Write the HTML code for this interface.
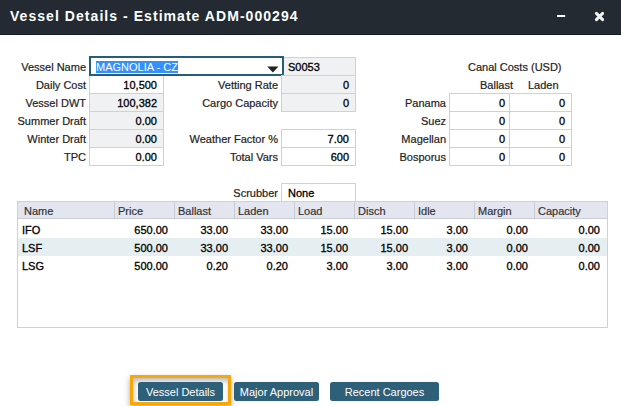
<!DOCTYPE html>
<html><head><meta charset="utf-8">
<style>
*{margin:0;padding:0;box-sizing:border-box}
html,body{width:621px;height:406px;overflow:hidden;background:#fff;font-family:"Liberation Sans",sans-serif;font-size:11px;color:#222;-webkit-text-stroke:0.2px currentColor}
.a{position:absolute;white-space:nowrap}
#tb{position:absolute;left:0;top:0;width:621px;height:35px;background:#232a31;border-bottom:1px solid #161d23}
#title{-webkit-text-stroke:0;position:absolute;left:10px;top:8px;font-size:14px;font-weight:bold;color:#fff;letter-spacing:1.05px;line-height:16px}
#min{position:absolute;left:557px;top:14px;width:9px;height:3px;background:#fff}
.lbl{position:absolute;text-align:right;line-height:18px;height:18px;color:#222;padding-top:1px}
.inp{position:absolute;border:1px solid #cbd2db;height:19px;line-height:17px;text-align:right;padding-right:6px;padding-top:1px;color:#000;background:#fff;-webkit-text-stroke:0.3px #000}
.ro{background:#eff1f3}
.grid{position:absolute;left:17px;top:201px;width:591px;height:127px;border:1px solid #cdd2da;background:#fff}
.hdr{position:absolute;left:0;top:0;width:589px;height:17px;background:#e4e6ef;border-bottom:1px solid #c8cdd7}
.hc{position:absolute;top:0;height:17px;line-height:16px;padding-top:1px;padding-left:3px;color:#333;border-left:1px solid #c8ccd6}
.row{position:absolute;left:0;width:589px;height:18px}
.c{position:absolute;line-height:18px;margin-top:1px;text-align:right;color:#000;-webkit-text-stroke:0.3px #000}
.btn{-webkit-text-stroke:0;padding-top:1px;position:absolute;top:382px;height:19px;background:#2e6079;color:#fff;border-radius:2.5px;text-align:center;line-height:19px}
</style></head><body>
<div id="tb"><div id="title">Vessel Details - Estimate ADM-000294</div>
<svg style="position:absolute;left:0;top:0" width="621" height="34"><rect x="557" y="15" width="8.2" height="2" fill="#fff"/></svg>
<svg style="position:absolute;left:594px;top:11px" width="11" height="11" viewBox="0 0 11 11"><path d="M2.4 2.4 L8.6 8.6 M8.6 2.4 L2.4 8.6" stroke="#f2f2f2" stroke-width="3" stroke-linecap="round"/></svg>
</div>

<!-- column 1 -->
<div class="lbl" style="left:0;width:86px;top:57px">Vessel Name</div>
<div class="lbl" style="left:0;width:86px;top:75px">Daily Cost</div>
<div class="lbl" style="left:0;width:86px;top:93px">Vessel DWT</div>
<div class="lbl" style="left:0;width:86px;top:111px">Summer Draft</div>
<div class="lbl" style="left:0;width:86px;top:129px">Winter Draft</div>
<div class="lbl" style="left:0;width:86px;top:147px">TPC</div>

<div class="inp ro" style="left:281px;top:57px;width:75px;text-align:left;padding-left:6px"><span>S0053</span></div>
<div class="inp" style="left:89px;top:75px;width:75px">10,500</div>
<div class="inp ro" style="left:89px;top:93px;width:75px">100,382</div>
<div class="inp ro" style="left:89px;top:111px;width:75px">0.00</div>
<div class="inp ro" style="left:89px;top:129px;width:75px">0.00</div>
<div class="inp" style="left:89px;top:147px;width:75px">0.00</div>

<div style="position:absolute;left:89px;top:56px;width:195px;height:20px;border:2px solid #275e77;background:#fff">
  <span class="a" style="left:5px;top:3px;line-height:12px;background:#3390ff;color:#fff;-webkit-text-stroke:0">MAGNOLIA - CZ</span>
  <svg style="position:absolute;left:176px;top:8px" width="12" height="7" viewBox="0 0 12 7"><path d="M0.2 0.5 L11.5 0.5 L5.85 6.6 Z" fill="#222"/></svg>
</div>

<!-- column 2 -->
<div class="lbl" style="left:180px;width:98px;top:75px">Vetting Rate</div>
<div class="lbl" style="left:180px;width:98px;top:93px">Cargo Capacity</div>
<div class="lbl" style="left:180px;width:98px;top:129px">Weather Factor %</div>
<div class="lbl" style="left:180px;width:98px;top:147px">Total Vars</div>
<div class="inp ro" style="left:281px;top:75px;width:75px">0</div>
<div class="inp ro" style="left:281px;top:93px;width:75px">0</div>
<div class="inp" style="left:281px;top:129px;width:75px">7.00</div>
<div class="inp" style="left:281px;top:147px;width:75px">600</div>

<!-- canal -->
<div class="a" style="left:468px;top:58px;line-height:18px">Canal Costs (USD)</div>
<div class="a" style="left:480px;top:76px;line-height:18px">Ballast</div>
<div class="a" style="left:528px;top:76px;line-height:18px">Laden</div>
<div class="lbl" style="left:380px;width:66px;top:93px">Panama</div>
<div class="lbl" style="left:380px;width:66px;top:111px">Suez</div>
<div class="lbl" style="left:380px;width:66px;top:129px">Magellan</div>
<div class="lbl" style="left:380px;width:66px;top:147px">Bosporus</div>
<div class="inp" style="left:449px;top:93px;width:61px;padding-right:4px">0</div>
<div class="inp" style="left:509px;top:93px;width:63px">0</div>
<div class="inp" style="left:449px;top:111px;width:61px;padding-right:4px">0</div>
<div class="inp" style="left:509px;top:111px;width:63px">0</div>
<div class="inp" style="left:449px;top:129px;width:61px;padding-right:4px">0</div>
<div class="inp" style="left:509px;top:129px;width:63px">0</div>
<div class="inp" style="left:449px;top:147px;width:61px;padding-right:4px">0</div>
<div class="inp" style="left:509px;top:147px;width:63px">0</div>

<!-- scrubber -->
<div class="lbl" style="left:200px;width:78px;top:183px">Scrubber</div>
<div class="inp" style="left:281px;top:183px;width:75px;text-align:left;padding-left:6px">None</div>

<!-- grid -->
<div class="grid">
 <div class="hdr">
  <div class="hc" style="left:0;border-left:0;padding-left:6px">Name</div>
  <div class="hc" style="left:96px">Price</div>
  <div class="hc" style="left:156px">Ballast</div>
  <div class="hc" style="left:216px">Laden</div>
  <div class="hc" style="left:276px">Load</div>
  <div class="hc" style="left:336px">Disch</div>
  <div class="hc" style="left:396px">Idle</div>
  <div class="hc" style="left:456px">Margin</div>
  <div class="hc" style="left:516px">Capacity</div>
 </div>
 <div class="row" style="top:17px;height:19px;">
  <div class="c" style="left:4px;text-align:left;top:1px">IFO</div>
  <div class="c" style="left:97px;width:53px;top:1px">650.00</div>
  <div class="c" style="left:157px;width:53px;top:1px">33.00</div>
  <div class="c" style="left:217px;width:53px;top:1px">33.00</div>
  <div class="c" style="left:277px;width:53px;top:1px">15.00</div>
  <div class="c" style="left:337px;width:53px;top:1px">15.00</div>
  <div class="c" style="left:397px;width:53px;top:1px">3.00</div>
  <div class="c" style="left:457px;width:53px;top:1px">0.00</div>
  <div class="c" style="left:517px;width:65px;top:1px">0.00</div>
 </div>
 <div class="row" style="top:36px;height:18px;background:#e5eef1;">
  <div class="c" style="left:4px;text-align:left;top:0px">LSF</div>
  <div class="c" style="left:97px;width:53px;top:0px">500.00</div>
  <div class="c" style="left:157px;width:53px;top:0px">33.00</div>
  <div class="c" style="left:217px;width:53px;top:0px">33.00</div>
  <div class="c" style="left:277px;width:53px;top:0px">15.00</div>
  <div class="c" style="left:337px;width:53px;top:0px">15.00</div>
  <div class="c" style="left:397px;width:53px;top:0px">3.00</div>
  <div class="c" style="left:457px;width:53px;top:0px">0.00</div>
  <div class="c" style="left:517px;width:65px;top:0px">0.00</div>
 </div>
 <div class="row" style="top:54px;height:18px;">
  <div class="c" style="left:4px;text-align:left;top:0px">LSG</div>
  <div class="c" style="left:97px;width:53px;top:0px">500.00</div>
  <div class="c" style="left:157px;width:53px;top:0px">0.20</div>
  <div class="c" style="left:217px;width:53px;top:0px">0.20</div>
  <div class="c" style="left:277px;width:53px;top:0px">3.00</div>
  <div class="c" style="left:337px;width:53px;top:0px">3.00</div>
  <div class="c" style="left:397px;width:53px;top:0px">3.00</div>
  <div class="c" style="left:457px;width:53px;top:0px">0.00</div>
  <div class="c" style="left:517px;width:65px;top:0px">0.00</div>
 </div>
</div>

<!-- buttons -->
<div style="position:absolute;left:130px;top:375px;width:101px;height:30px;border:3px solid #f7a806;box-shadow:0 3px 6px rgba(0,0,0,0.35), inset 1px 3px 5px rgba(0,0,0,0.27)"></div>
<div class="btn" style="left:138px;width:85px">Vessel Details</div>
<div class="btn" style="left:234px;width:85px">Major Approval</div>
<div class="btn" style="left:330px;width:109px">Recent Cargoes</div>
</body></html>
